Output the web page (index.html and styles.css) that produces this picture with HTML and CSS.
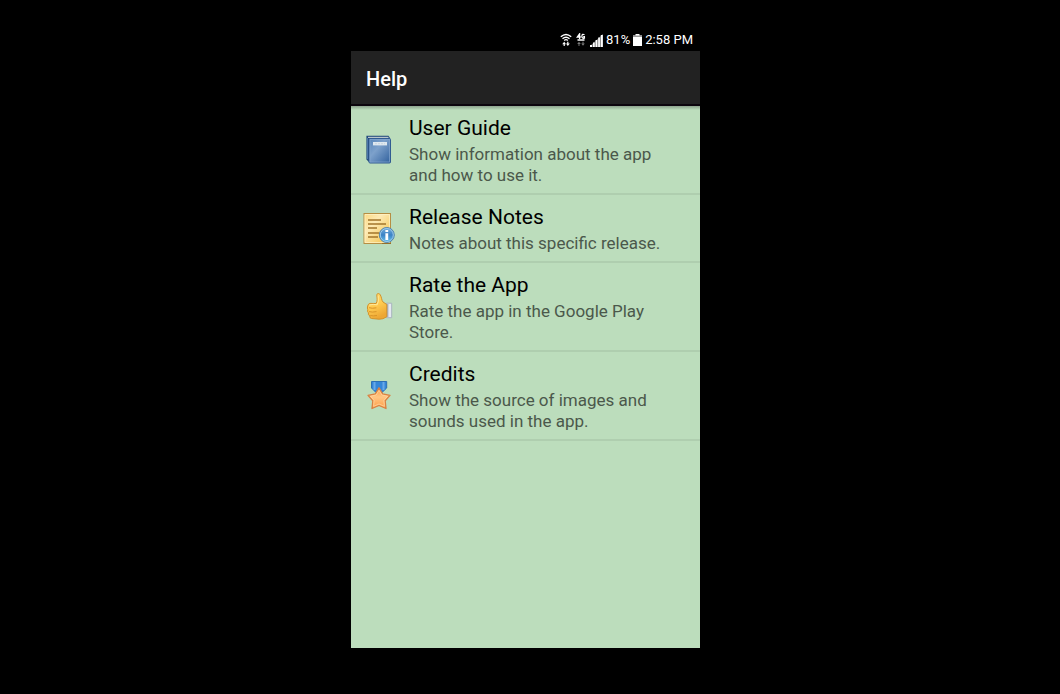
FILE: index.html
```
<!DOCTYPE html>
<html lang="en">
	<head>
		<meta charset="utf-8">
		<title>Help</title>
		<meta name="viewport" content="width=device-width, initial-scale=1.0">
		<link rel="stylesheet" href="styles.css">
	</head>
	<body>
		<div class="phone">
			<div class="status">
				<svg class="wifi" width="12" height="14" viewBox="0 0 12 14" fill="none" stroke="#fff">
					<path d="M.8 3.8Q6-.9 11.2 3.8M2.5 5.8Q6 2.7 9.5 5.8" stroke-width="1.4"/>
					<path d="M4.2 7.4Q6 5.9 7.8 7.4" stroke-width="1.3"/>
					<path d="M2.2 11.2L4.2 8.8 6 11.2zM6 10.6L7.8 13 9.8 10.6z" fill="#fff" stroke="none"/>
					<path d="M4.2 10.5V13M7.8 8.8V11" stroke-width="1.2"/>
				</svg>
				<svg class="data" width="10" height="14" viewBox="0 0 10 14" fill="none" stroke="#fff">
					<path d="M3.6 6V.8L1.3 4H4.8M8.5 1.8Q6.2.4 5.9 3T8.4 5.2V3.6H7.2M1.5 7H8.5" stroke-width="1.3"/>
					<path d="M1.2 10.9L3 8.7 4.8 10.9zM5.2 10.6L7 12.8 8.8 10.6z" fill="#777" stroke="none"/>
					<path d="M3 10V13M7 8.7V11" stroke="#777"/>
				</svg>
				<svg class="signal" width="13" height="13" viewBox="0 0 13 13" fill="#fff">
					<path d="M0 11h2v2H0zM3 8.5h1.7V13H3zM5.6 6h1.7v7H5.6zM8.2 3.5h1.7V13H8.2zM10.8 1h2v12h-2z"/>
					<path d="M0 12L13 0V13H0z" opacity=".45"/>
				</svg>
				<span class="percent">81%</span>
				<svg class="battery" width="9" height="12" viewBox="0 0 9 12">
					<path d="M2.5 0h4v1.5H9V12H0V1.5h2.5z" fill="#fff"/>
					<path d="M0 1.5h9V3H0z" fill="#999"/>
				</svg>
				<span>2:58 PM</span>
			</div>
			<header class="bar">
				<h1>Help</h1>
			</header>
			<main class="menu">
				<a class="item" href="#guide">
					<svg class="icon" width="32" height="32" viewBox="0 0 32 32">
						<defs>
							<linearGradient id="cover" x1="0" y1="0" x2="1" y2="1">
								<stop offset="0" stop-color="#5684b8"/>
								<stop offset=".4" stop-color="#7da1cb"/>
								<stop offset="1" stop-color="#2f5f9c"/>
							</linearGradient>
						</defs>
						<path d="M3.4 1.7H25.5L27 4V6H6V28L3.4 25.5z" fill="#244b7c"/>
						<path d="M5 2.8H25.5V4H5z" fill="#b9c5ca"/>
						<path d="M4.5 4V25" stroke="#4c77aa"/>
						<rect x="6" y="4.5" width="21.5" height="24.5" rx="1" fill="url(#cover)" stroke="#315b91"/>
						<rect x="7" y="5.5" width="19.5" height="22.5" fill="none" stroke="#83a6ce" stroke-width=".7"/>
						<path d="M10 8h14v3.4H10z" fill="#dfe8ef"/>
						<path d="M12 9.7H22" stroke="#c9d6e0" stroke-dasharray="2 1"/>
					</svg>
					<span class="text">
						<span class="title">User Guide</span>
						<span class="summary">Show information about the app and how to use it.</span>
					</span>
				</a>
				<a class="item" href="#notes">
					<svg class="icon" width="32" height="32" viewBox="0 0 32 32">
						<defs>
							<linearGradient id="paper" x1="0" y1="0" x2="1" y2="1">
								<stop offset="0" stop-color="#fbd981"/>
								<stop offset=".35" stop-color="#fdeab4"/>
								<stop offset="1" stop-color="#f2bd3e"/>
							</linearGradient>
							<linearGradient id="info" x1="0" y1="0" x2="0" y2="1">
								<stop offset="0" stop-color="#75afdf"/>
								<stop offset=".5" stop-color="#3b82c5"/>
								<stop offset="1" stop-color="#67c4ed"/>
							</linearGradient>
						</defs>
						<rect x="1" y=".5" width="26.5" height="30" fill="url(#paper)" stroke="#b68e43"/>
						<path d="M2 1.5H26.5V29.5H2z" fill="none" stroke="#fff4c8" stroke-width=".7"/>
						<path d="M5 7H18M5 11H23M5 15H14M5 20H16M5 24H15" stroke="#a3752b" stroke-width="1.3"/>
						<path d="M19 30.5H28" stroke="#95702d"/>
						<circle cx="23.8" cy="22" r="7.5" fill="url(#info)" stroke="#5285ad"/>
						<circle cx="23.8" cy="22" r="6.5" fill="none" stroke="#9fcbe9"/>
						<path d="M22.4 20.3h2.8v6.6h-2.8zM22.4 17h2.8v2.1h-2.8z" fill="#fff"/>
					</svg>
					<span class="text">
						<span class="title">Release Notes</span>
						<span class="summary">Notes about this specific release.</span>
					</span>
				</a>
				<a class="item" href="#rate">
					<svg class="icon" width="32" height="32" viewBox="0 0 32 32">
						<defs>
							<linearGradient id="hand" x1="0" y1="0" x2=".4" y2="1">
								<stop offset="0" stop-color="#ffdc71"/>
								<stop offset=".55" stop-color="#ffcb50"/>
								<stop offset="1" stop-color="#eda733"/>
							</linearGradient>
						</defs>
						<path d="M23.5 12.2h5.2v14.5h-5.2z" fill="#e5e8f1" stroke="#a8b4bd"/>
						<path d="M24.8 13v13" stroke="#8e9bae"/>
						<path d="M13 12.5C14.8 10 14 6.5 13.8 4.2 13.7 2.4 16 1.8 17.2 3.7 18.8 6.4 18.5 9.3 20 11L23.8 13.5V25.7Q20 28.5 16 28.2L8.5 27.5Q6.3 27 6.8 25 4.9 24 5.4 21.8 4 20.8 4.8 18.7 4 17.3 4.7 15 5.2 12.6 7 12.4z" fill="url(#hand)" stroke="#d2922b"/>
						<path d="M6 16.7Q9 17.7 13.4 16.8M6 20.6Q9 21.6 13.5 20.6M7.3 24.5Q10 25.3 14 24.5" fill="none" stroke="#d99428"/>
						<path d="M6.3 14Q10 12.8 14.2 13.8 16 11 15.2 4.7" fill="none" stroke="#ffe99b"/>
					</svg>
					<span class="text">
						<span class="title">Rate the App</span>
						<span class="summary">Rate the app in the Google Play Store.</span>
					</span>
				</a>
				<a class="item" href="#credits">
					<svg class="icon" width="32" height="32" viewBox="0 0 32 32">
						<defs>
							<linearGradient id="star" x1="0" y1="0" x2="0" y2="1">
								<stop offset="0" stop-color="#ff9d45"/>
								<stop offset=".45" stop-color="#ffc684"/>
								<stop offset="1" stop-color="#ff9d46"/>
							</linearGradient>
						</defs>
						<path d="M8.5 1.5H23.7V8L19 12.5H13L8.5 8z" fill="#3486d8" stroke="#2d70b5"/>
						<path d="M11.5 2V10M20.5 2V10" stroke="#68a9e8" stroke-width="2"/>
						<path d="M16 7.8L19.6 13.8 27 15.4 22.2 20.8 23 28.5 16 25.5 9 28.5 9.8 20.8 5 15.4 12.4 13.8z" fill="url(#star)" stroke="#d98142" stroke-width="1.3" stroke-linejoin="round"/>
						<path d="M16 10.4L18.9 15 24.5 16.3 20.9 20.4 21.4 26.3 16 24 10.6 26.3 11.1 20.4 7.5 16.3 13.1 15z" fill="none" stroke="#ffd9a6" stroke-width=".7"/>
					</svg>
					<span class="text">
						<span class="title">Credits</span>
						<span class="summary">Show the source of images and sounds used in the app.</span>
					</span>
				</a>
			</main>
		</div>
	</body>
</html>
```
FILE: styles.css
```
* {
	box-sizing: border-box;
}

body {
	display: grid;
	grid-template-columns: 351fr minmax(320px, 349fr) 360fr;
	min-height: 100vh;
	margin: 0;
	padding: 29px 0 46px;
	background-color: #000000;
	font-family: Roboto, "Liberation Sans", sans-serif;
}

.phone {
	grid-column: 2;
	display: flex;
	flex-direction: column;
}

.status {
	display: flex;
	justify-content: flex-end;
	align-items: center;
	gap: 3px;
	height: 22px;
	padding-right: 7px;
	color: #ffffff;
	font-size: 13px;
	line-height: 22px;
}

.wifi,
.data {
	margin-right: 1px;
}

.bar {
	display: flex;
	align-items: center;
	height: 55px;
	padding: 2px 15px 0;
	background-color: #222222;
	border-bottom: 2px solid #0c050d;
}

.bar h1 {
	margin: 0;
	color: #ffffff;
	font-size: 20px;
	font-weight: 500;
	line-height: 26px;
}

.menu {
	flex: 1;
	background: linear-gradient(#8ea48e, #bcddbc 4px);
}

.item {
	display: flex;
	align-items: center;
	gap: 14px;
	padding: 8px 20px 7px 12px;
	border-bottom: 2px solid #afceaf;
	color: #000000;
	text-decoration: none;
}

.icon {
	flex: none;
}

.title,
.summary {
	display: block;
}

.title {
	margin-bottom: 2px;
	font-size: 21px;
	line-height: 28px;
}

.summary {
	color: #4b584b;
	font-size: 17px;
	line-height: 21px;
}
```
